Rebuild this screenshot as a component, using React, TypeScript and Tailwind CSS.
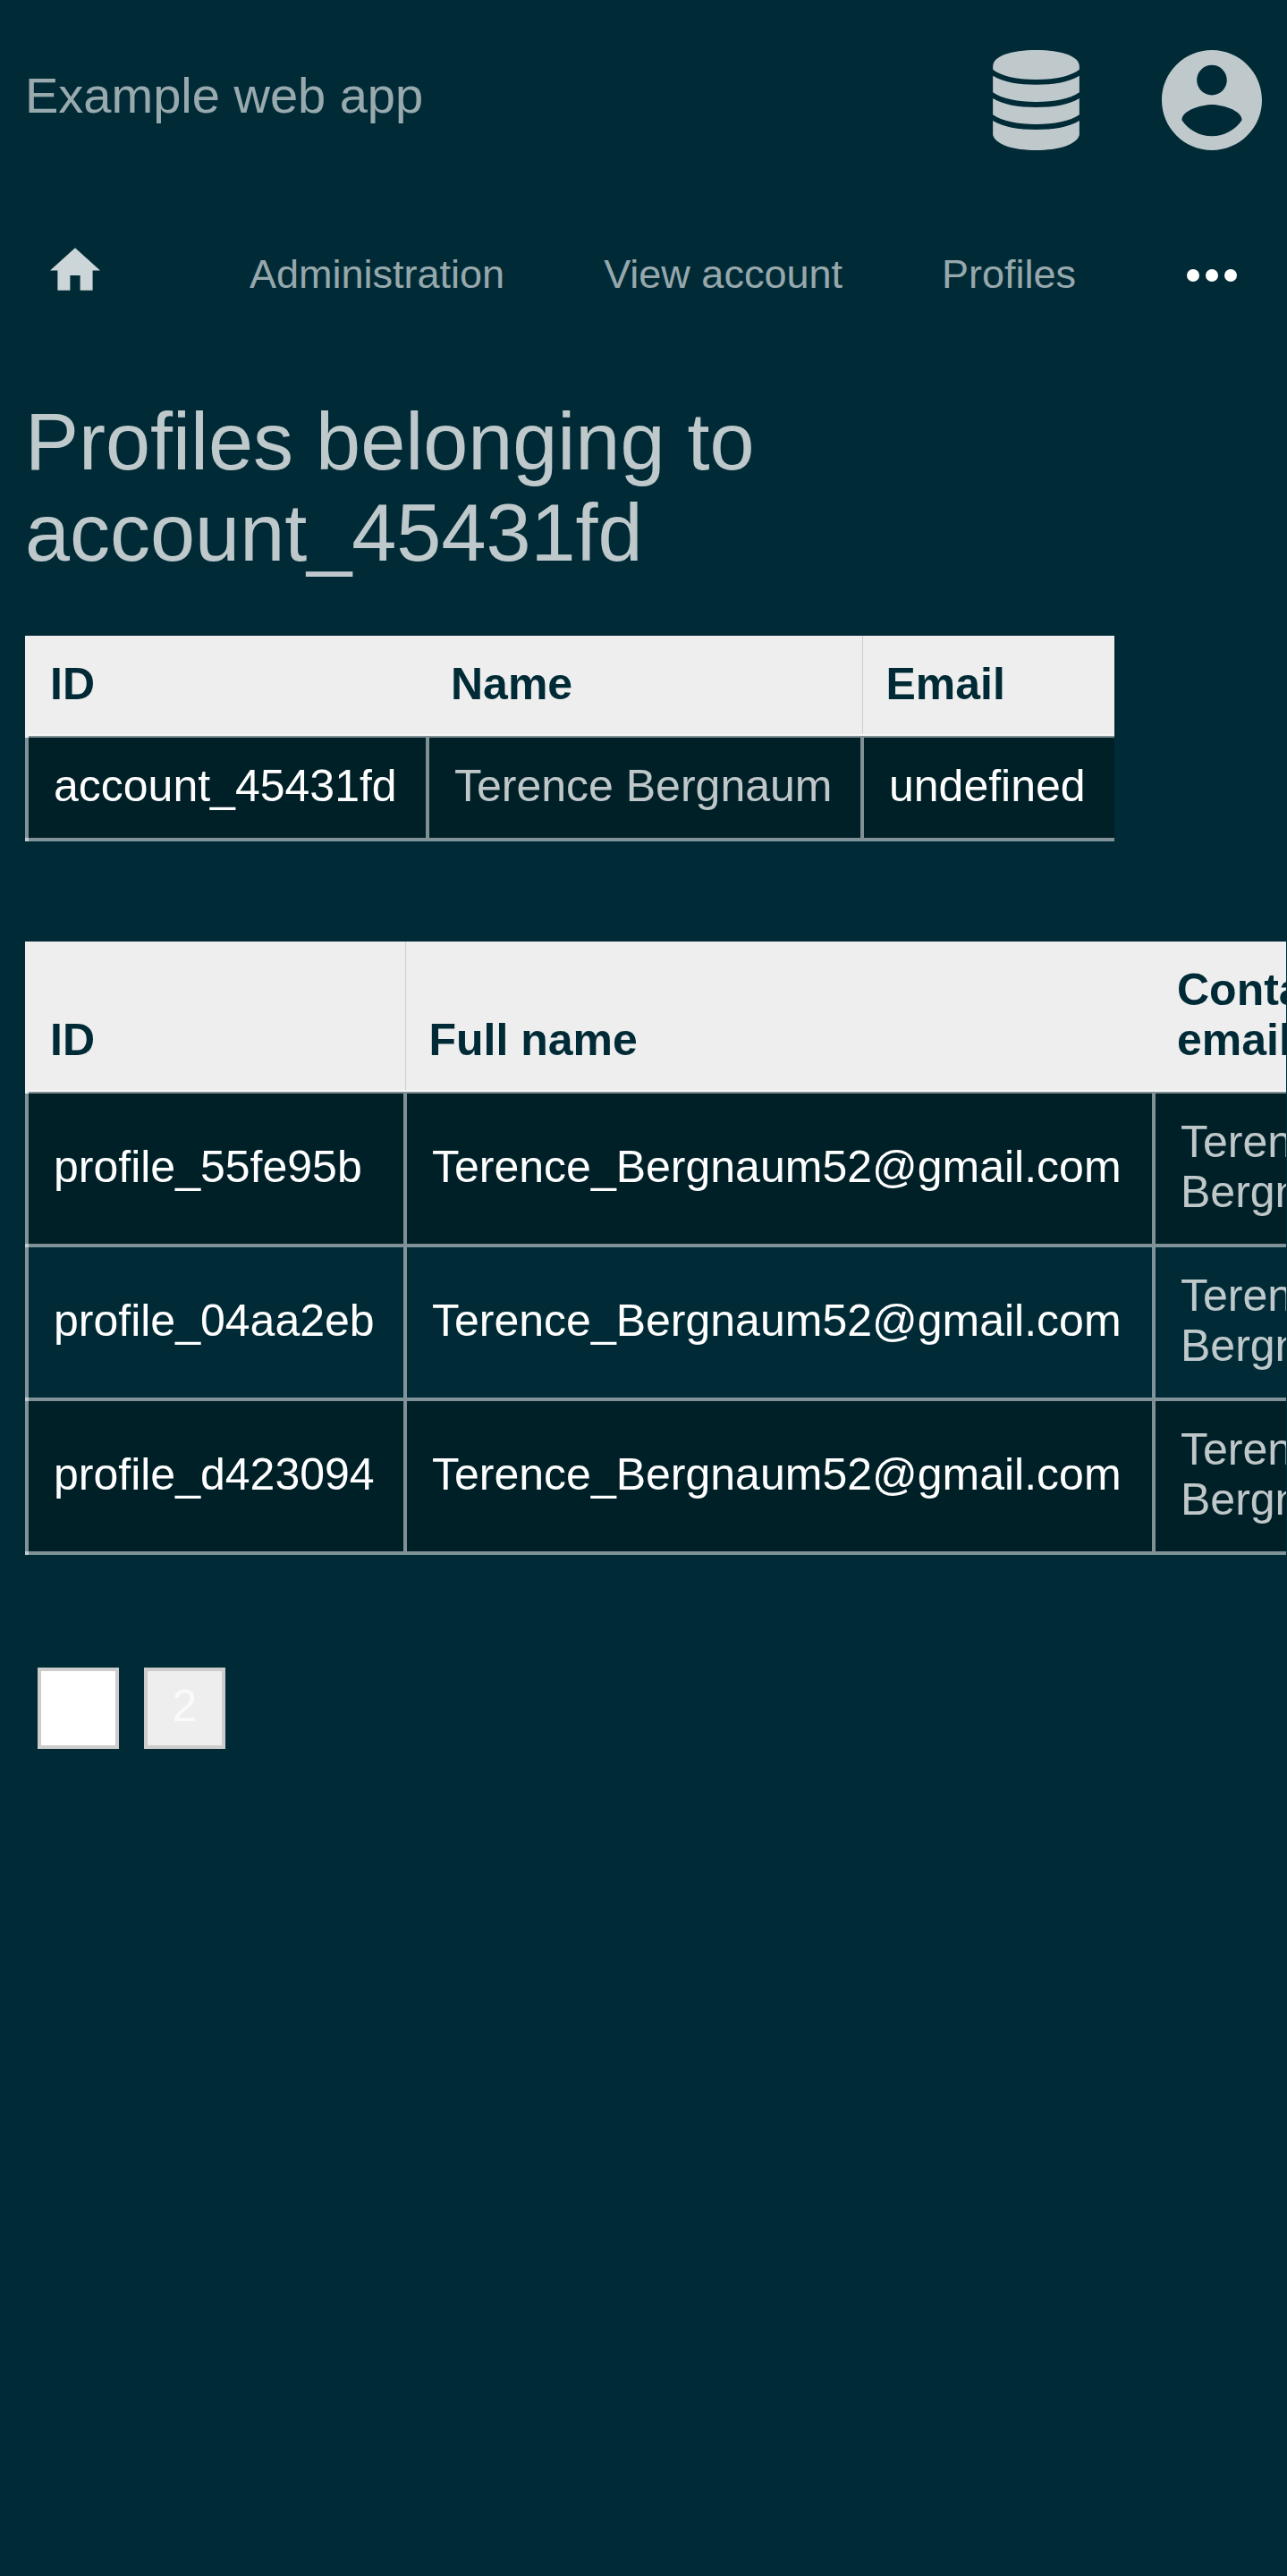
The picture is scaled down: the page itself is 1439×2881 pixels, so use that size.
import React from "react";

type Column = { label: string; width: string; divider?: boolean };
type Cell = { text: string; link?: boolean };

const accountColumns: Column[] = [
  { label: "ID", width: "w-[448px] min-w-[448px]" },
  { label: "Name", width: "w-[486px] min-w-[486px]", divider: true },
  { label: "Email", width: "w-[282px] min-w-[282px]" },
];

const accountRows: Cell[][] = [
  [{ text: "account_45431fd" }, { text: "Terence Bergnaum", link: true }, { text: "undefined" }],
];

const profileColumns: Column[] = [
  { label: "ID", width: "w-[423px] min-w-[423px]", divider: true },
  { label: "Full name", width: "w-[837px] min-w-[837px]" },
  { label: "Contact email", width: "w-[288px] min-w-[288px]" },
];

const profileRows: Cell[][] = ["profile_55fe95b", "profile_04aa2eb", "profile_d423094"].map((id) => [
  { text: id },
  { text: "Terence_Bergnaum52@gmail.com" },
  { text: "Terence Bergnaum", link: true },
]);

function DatabaseIcon() {
  return (
    <svg viewBox="0 0 290 336" className="h-28 w-[97px] fill-current" aria-hidden="true">
      <path d="M0 55C0 20 60 0 145 0S290 20 290 55V65C265 85 215 99 145 99S25 85 0 65Z" />
      <path d="M0 86C35 107 85 116 145 116S255 107 290 86V142C260 164 205 174 145 174S30 164 0 142Z" />
      <path d="M0 162C35 183 85 192 145 192S255 183 290 162V217C260 239 205 249 145 249S30 239 0 217Z" />
      <path d="M0 237C35 258 85 267 145 267S255 258 290 237V285C280 318 220 336 145 336S10 318 0 285Z" />
    </svg>
  );
}

function AccountIcon() {
  return (
    <svg viewBox="2 2 20 20" className="size-28 fill-current" aria-hidden="true">
      <path d="M12 2C6.48 2 2 6.48 2 12s4.48 10 10 10 10-4.48 10-10S17.52 2 12 2zm0 3c1.66 0 3 1.34 3 3s-1.34 3-3 3-3-1.34-3-3 1.34-3 3-3zm0 14.2c-2.5 0-4.71-1.28-6-3.22.03-1.99 4-3.08 6-3.08 1.99 0 5.97 1.09 6 3.08-1.29 1.94-3.5 3.22-6 3.22z" />
    </svg>
  );
}

function HomeIcon() {
  return (
    <svg viewBox="2 3 20 17" className="h-12 w-14 fill-current" aria-hidden="true">
      <path d="M10 20v-6h4v6h5v-8h3L12 3 2 12h3v8z" />
    </svg>
  );
}

function MoreIcon() {
  return (
    <svg viewBox="0 0 56 14" className="h-3.5 w-14 fill-current" aria-hidden="true">
      <circle cx="7" cy="7" r="7" />
      <circle cx="28" cy="7" r="7" />
      <circle cx="49" cy="7" r="7" />
    </svg>
  );
}

function DataTable({ label, columns, rows }: { label: string; columns: Column[]; rows: Cell[][] }) {
  return (
    <table aria-label={label} className="border-collapse text-left text-[50px] leading-[56px]">
      <thead>
        <tr className="bg-[#eeeeee] text-[#002b36]">
          {columns.map((c) => (
            <th
              key={c.label}
              scope="col"
              className={`${c.width} border-[#eeeeee] pt-[26px] pr-7 pb-7 pl-[26px] align-bottom font-bold first:border-l-4 first:pl-6 ${c.divider ? "border-r border-r-[#c8d0d2]" : ""}`}
            >
              {c.label}
            </th>
          ))}
        </tr>
      </thead>
      <tbody>
        {rows.map((row) => (
          <tr key={row[0].text} className="odd:bg-black/25">
            {row.map((cell, i) => (
              <td key={i} className="border-y-4 border-l-4 border-white/50 px-7 pt-[26px] pb-[30px] align-middle text-white">
                {cell.link ? (
                  <a href="#" className="text-white/75">
                    {cell.text}
                  </a>
                ) : (
                  cell.text
                )}
              </td>
            ))}
          </tr>
        ))}
      </tbody>
    </table>
  );
}

export default function App() {
  return (
    <div className="min-h-screen bg-[#002b36] font-['Liberation_Sans',Arial,sans-serif] text-white">
      <header className="flex items-center justify-between px-7 py-14">
        <a href="#" className="pb-2.5 text-[56px] leading-16 text-white/60">
          Example web app
        </a>
        <div className="flex items-center gap-23 text-white/75">
          <a href="#" aria-label="Database">
            <DatabaseIcon />
          </a>
          <a href="#" aria-label="Account">
            <AccountIcon />
          </a>
        </div>
      </header>

      <nav aria-label="Main" className="flex h-42 items-center gap-[111px] px-14 text-[45px] leading-[52px]">
        <a href="#" aria-label="Home" className="mr-14 pb-3.5 text-white/80">
          <HomeIcon />
        </a>
        <a href="#" className="pb-0.5 text-white/60">Administration</a>
        <a href="#" className="pb-0.5 text-white/60">View account</a>
        <a href="#" className="pb-0.5 text-white/60">Profiles</a>
        <button type="button" aria-label="More" className="ml-auto text-white">
          <MoreIcon />
        </button>
      </nav>

      <main>
        <h1 className="mt-[51px] max-w-[1200px] px-7 text-[90px] leading-[102px] text-white/75">
          Profiles belonging to account_45431fd
        </h1>

        <section className="mt-16 mr-px overflow-x-auto pl-7 [scrollbar-width:none]">
          <DataTable label="Account" columns={accountColumns} rows={accountRows} />
        </section>

        <section className="mt-28 mr-px overflow-x-auto pl-7 [scrollbar-width:none]">
          <DataTable label="Profiles" columns={profileColumns} rows={profileRows} />
        </section>

        <div className="mt-[126px] flex gap-7 px-[42px] text-[50px] leading-[56px]">
          <button type="button" aria-current="page" className="size-[91px] border-4 border-[#cccccc] bg-white pb-1.5 text-white">
            1
          </button>
          <button type="button" className="size-[91px] border-4 border-[#cccccc] bg-[#eeeeee] pb-1.5 text-[#fafafa]">
            2
          </button>
        </div>
      </main>
    </div>
  );
}
